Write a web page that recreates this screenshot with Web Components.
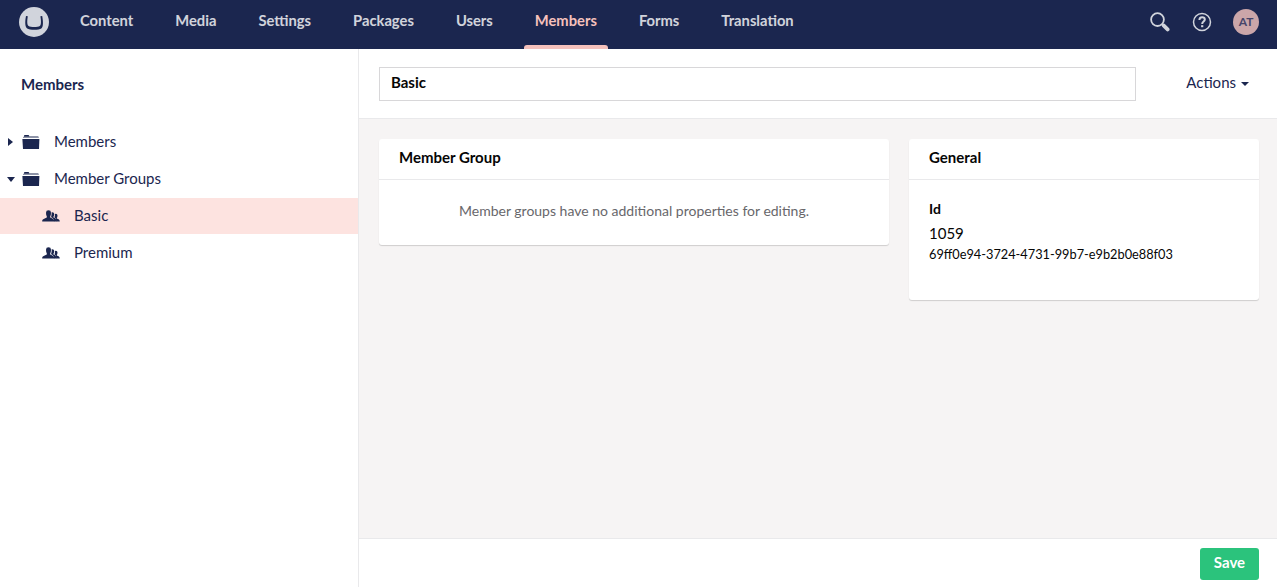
<!DOCTYPE html>
<html lang="en">
<head>
<meta charset="utf-8">
<title>Members</title>
<style>
html, body { margin: 0; height: 100%; }
body { font: 400 15px/20px Lato, "Open Sans", sans-serif; color: #1b264f; overflow: hidden; }
</style>
</head>
<body>
<bo-app></bo-app>
<script>
const define = (name, html) => customElements.define(name, class extends HTMLElement {
  constructor() {
    super();
    const t = document.createElement('template');
    t.innerHTML = html;
    this.attachShadow({ mode: 'open' }).append(t.content.cloneNode(true));
  }
});

define('bo-section', `<style>
:host { display: flex; box-sizing: border-box; height: 49px; padding: 10px 11px 0; margin: 0 10px; flex-direction: column; justify-content: space-between; font-weight: 700; font-size: 14.74px; color: #fff; white-space: nowrap; }
span { opacity: .8; }
:host([active]) span { color: #f5c1bc; opacity: 1; }
i { height: 4px; margin: 0 -11px; border-radius: 3px 3px 0 0; }
:host([active]) i { background: #f5c1bc; }
</style><span><slot></slot></span><i></i>`);

define('bo-header', `<style>
:host { display: flex; height: 49px; box-sizing: border-box; background: #1b264f; padding: 0 18px 0 19px; }
.logo { margin: 7px 10px 0 0; width: 30px; height: 30px; }
nav { display: flex; flex: 1; }
.tools { display: flex; align-items: center; height: 44px; }
.search { margin-right: 22px; } .help { margin-right: 21px; }
.avatar { width: 26px; height: 26px; border-radius: 50%; background: #cba6a9; font-size: 12px; line-height: 26px; text-align: center; font-weight: 700; color: #46456a; }
svg { display: block; }
</style>
<svg class="logo" viewBox="0 0 30 30"><circle cx="15" cy="15" r="15" fill="#d1d4dc"/><path d="M7 9C5.8 15 6 20 8.2 21.4C10.5 23.2 20 23.2 22.3 21.4C24.4 20 24.3 15 23.2 9L21.4 9.3C22.2 14 22.3 18 20.8 19.1C19 20.4 11.4 20.4 9.6 19.1C8 18 8 14 8.8 9.3Z" fill="#1b264f"/></svg>
<nav><bo-section>Content</bo-section><bo-section>Media</bo-section><bo-section>Settings</bo-section><bo-section>Packages</bo-section><bo-section>Users</bo-section><bo-section active>Members</bo-section><bo-section>Forms</bo-section><bo-section>Translation</bo-section></nav>
<div class="tools">
<svg class="search" width="20" height="20" viewBox="0 0 20 20" fill="none" stroke="#d1d4dc"><circle cx="7.5" cy="7.6" r="6.4" stroke-width="1.8"/><path d="M12.2 12.2L14 14" stroke-width="2"/><path d="M13.8 13.6L17.6 17.4" stroke-width="3.8" stroke-linecap="round"/></svg>
<svg class="help" width="20" height="20" viewBox="0 0 20 20" fill="none" stroke="#d1d4dc"><circle cx="10" cy="10" r="8.5" stroke-width="1.5"/><path d="M7.4 8C7.4 6.2 8.5 5.2 10.1 5.2C11.8 5.2 12.8 6.1 12.8 7.5C12.8 9.6 10.2 9.5 10.2 12" stroke-width="2"/><path d="M9.1 14.2H11.3" stroke-width="2"/></svg>
<div class="avatar">AT</div></div>`);

define('bo-icon-folder', `<style>:host, svg { display: block; width: 18px; height: 15px; }</style>
<svg viewBox="0 0 18 15"><path d="M1 3V1.8H16V1.2Q16.8 1.2 16.8 2V3Z" fill="#8d93a7"/><path d="M7.2 1H16V2H7.2Z" fill="#8d93a7"/><path d="M2 1.8V1Q2 .1 2.8 .1H6.4Q7.2 .1 7.4 1.8Z" fill="#1b264f"/><path d="M.4 4H17.4L17 14.1H1Z" fill="#1b264f"/></svg>`);

define('bo-icon-users', `<style>:host, svg { display: block; width: 18px; height: 12px; }</style>
<svg viewBox="0 0 18 12" fill="#1b264f"><path d="M.2 11.6V10.5Q.4 9.4 2.2 8.8L4.8 7.6V6.3Q4 5 4 2.7Q4 .3 6.5.3Q9 .3 9 2.7Q9 5 8.2 6.3V7.6L10.4 8.4Q12.3 9.3 12.4 11.6Z"/><path d="M9.6 2.2Q12.2 1.8 12.2 4Q12.2 5.8 11.5 6.6V7.4L13.2 8.3Q14.3 9.2 14.4 11.6H12Q12 9 10.6 8L9.2 7.3V6.5Q9.9 4.3 9.6 2.2Z"/><path d="M12.9 4Q15.4 3.3 15.5 5.5Q15.5 7.2 14.8 7.9V8.5L16.6 9.2Q17.8 9.8 17.8 11.6H14.1Q14.2 9.2 13.5 8.3L12.5 7.4Q13.2 5.5 12.9 4Z"/></svg>`);

define('bo-tree-item', `<style>
:host { display: flex; align-items: center; height: 36px; margin-bottom: 1px; }
:host([active]) { background: #fde3e0; }
.arrow { width: 10px; margin: 0 6px 0 6px; display: flex; justify-content: center; }
.arrow::before { content: ""; border: 4px solid transparent; border-left: 5px solid #1b264f; border-right: 0; margin-right: 1px; }
:host([open]) .arrow::before { border: 4px solid transparent; border-top: 5px solid #1b264f; border-bottom: 0; margin: 0; }
:host([leaf]) .arrow { width: 30px; } :host([leaf]) .arrow::before { display: none; }
.label { margin: -2px 0 0 14px; }
</style><span class="arrow"></span><slot name="icon"></slot><span class="label"><slot></slot></span>`);

define('bo-sidebar', `<style>
:host { display: block; width: 358px; border-right: 1px solid #e9e9eb; background: #fff; }
h5 { margin: 0; padding: 25px 21px 30px; font: inherit; font-weight: 700; }
</style><h5>Members</h5>
<bo-tree-item><bo-icon-folder slot="icon"></bo-icon-folder>Members</bo-tree-item>
<bo-tree-item open><bo-icon-folder slot="icon"></bo-icon-folder>Member Groups</bo-tree-item>
<bo-tree-item leaf active><bo-icon-users slot="icon"></bo-icon-users>Basic</bo-tree-item>
<bo-tree-item leaf><bo-icon-users slot="icon"></bo-icon-users>Premium</bo-tree-item>`);

define('bo-box', `<style>
:host { display: block; background: #fff; border-radius: 3px; box-shadow: 0 1px 1px rgba(0,0,0,.16); color: #060606; }
header { height: 40px; box-sizing: border-box; padding: 8px 20px; font-weight: 700; }
.body { border-top: 1px solid #e9e9eb; padding: 20px; }
</style><header><slot name="title"></slot></header><div class="body"><slot></slot></div>`);

define('bo-editor', `<style>
:host { display: flex; flex-direction: column; flex: 1; min-width: 0; }
.head { display: flex; align-items: center; height: 69px; border-bottom: 1px solid #e9e9eb; padding: 0 28px 0 20px; background: #fff; }
.name { flex: 1; height: 34px; box-sizing: border-box; border: 1px solid #d8d7d9; padding: 4px 11px; color: #060606; font-weight: 700; margin-right: 50px; }
.actions { display: flex; align-items: center; gap: 5px; margin-top: -3px; }
.actions i { margin-top: 3px; border: 4px solid transparent; border-top-color: #1b264f; border-bottom: 0; }
.content { flex: 1; background: #f6f4f4; display: flex; align-items: flex-start; gap: 20px; padding: 20px 18px 0 20px; }
.main { flex: 1; height: 106px; } .side { width: 350px; height: 161px; }
.empty { font-size: 14px; color: #68676b; text-align: center; padding-top: 1px; }
.id { font-size: 14px; font-weight: 700; line-height: 18px; }
.num { margin-top: 4px; line-height: 23px; } .key { font-size: 12.78px; line-height: 18px; }
.foot { height: 48px; border-top: 1px solid #e9e9eb; display: flex; justify-content: flex-end; align-items: center; padding: 0 18px 0 0; background: #fff; }
button { margin-top: 2px; width: 59px; height: 32px; border: 0; padding: 0 0 4px; border-radius: 3px; background: #2bc37c; color: #fff; font: inherit; font-weight: 700; }
</style>
<div class="head"><div class="name">Basic</div><div class="actions">Actions<i></i></div></div>
<div class="content">
<bo-box class="main"><span slot="title">Member Group</span><div class="empty">Member groups have no additional properties for editing.</div></bo-box>
<bo-box class="side"><span slot="title">General</span><div class="id">Id</div><div class="num">1059</div><div class="key">69ff0e94-3724-4731-99b7-e9b2b0e88f03</div></bo-box>
</div>
<div class="foot"><button>Save</button></div>`);

define('bo-app', `<style>
:host { display: flex; flex-direction: column; height: 100vh; }
main { flex: 1; display: flex; min-height: 0; }
</style><bo-header></bo-header><main><bo-sidebar></bo-sidebar><bo-editor></bo-editor></main>`);
</script>
</body>
</html>
